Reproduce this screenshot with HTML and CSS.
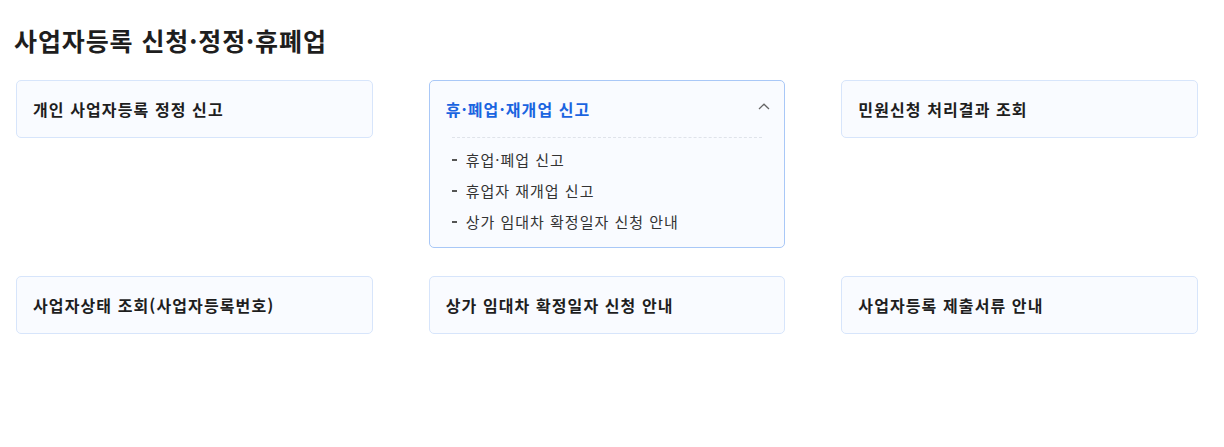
FILE: index.html
```html
<!DOCTYPE html>
<html lang="ko">
<head>
<meta charset="utf-8">
<title>사업자등록 신청·정정·휴폐업</title>
<link rel="stylesheet" href="styles.css">
</head>
<body>
<div class="page">
  <h2 class="page-title">사업자등록 신청·정정·휴폐업</h2>
  <div class="menu-grid">
    <div class="card"><div class="card-head"><span class="card-title">개인 사업자등록 정정 신고</span></div></div>
    <div class="card open">
      <div class="card-head">
        <span class="card-title">휴·폐업·재개업 신고</span>
        <svg class="chev" width="12" height="7" viewBox="0 0 12 7"><path d="M1 6 L6 1.2 L11 6" fill="none" stroke="#666" stroke-width="1.3"/></svg>
      </div>
      <ul class="sub">
        <li>휴업·폐업 신고</li>
        <li>휴업자 재개업 신고</li>
        <li>상가 임대차 확정일자 신청 안내</li>
      </ul>
    </div>
    <div class="card"><div class="card-head"><span class="card-title">민원신청 처리결과 조회</span></div></div>
    <div class="card"><div class="card-head"><span class="card-title">사업자상태 조회(사업자등록번호)</span></div></div>
    <div class="card"><div class="card-head"><span class="card-title">상가 임대차 확정일자 신청 안내</span></div></div>
    <div class="card"><div class="card-head"><span class="card-title">사업자등록 제출서류 안내</span></div></div>
  </div>
</div>
</body>
</html>
```
FILE: styles.css
```css
html, body {
  margin: 0;
  padding: 0;
  background: #fff;
}
body {
  font-family: "Noto Sans CJK KR", "Noto Sans", sans-serif;
  color: #222;
}
.page {
  padding: 22px 0 0 16px;
  width: 1182px;
}
.page-title {
  margin: 0 0 0 -2px;
  font-size: 25px;
  line-height: 36px;
  font-weight: 700;
  color: #1e1e1e;
  letter-spacing: 0.9px;
}
.menu-grid {
  margin-top: 22px;
  display: grid;
  grid-template-columns: repeat(3, 1fr);
  column-gap: 56px;
  row-gap: 28px;
  align-items: start;
}
.card {
  border: 1px solid #d7e5fb;
  border-radius: 5px;
  background: #f9fbff;
}
.card.open {
  border-color: #a9c8f7;
}
.card-head {
  display: flex;
  align-items: center;
  justify-content: space-between;
  padding: 16px 16px 16px 16px;
}
.card-title {
  font-size: 16px;
  line-height: 24px;
  font-weight: 700;
  color: #1e1e1e;
  letter-spacing: 1.1px;
}
.open .card-title {
  color: #1a64e0;
}
.chev {
  margin-right: -2px;
  margin-top: -5px;
}
.sub {
  list-style: none;
  margin: 0 22px 0 22px;
  padding: 11px 0 14px 0;
  border-top: 1px dashed #dfe3ea;
}
.sub li {
  font-size: 15px;
  line-height: 22px;
  color: #333;
  padding-left: 14px;
  position: relative;
  letter-spacing: 1px;
}
.sub li + li {
  margin-top: 9px;
}
.sub li::before {
  content: "";
  position: absolute;
  left: 0;
  top: 10px;
  width: 5px;
  height: 2px;
  background: #555;
}
```
